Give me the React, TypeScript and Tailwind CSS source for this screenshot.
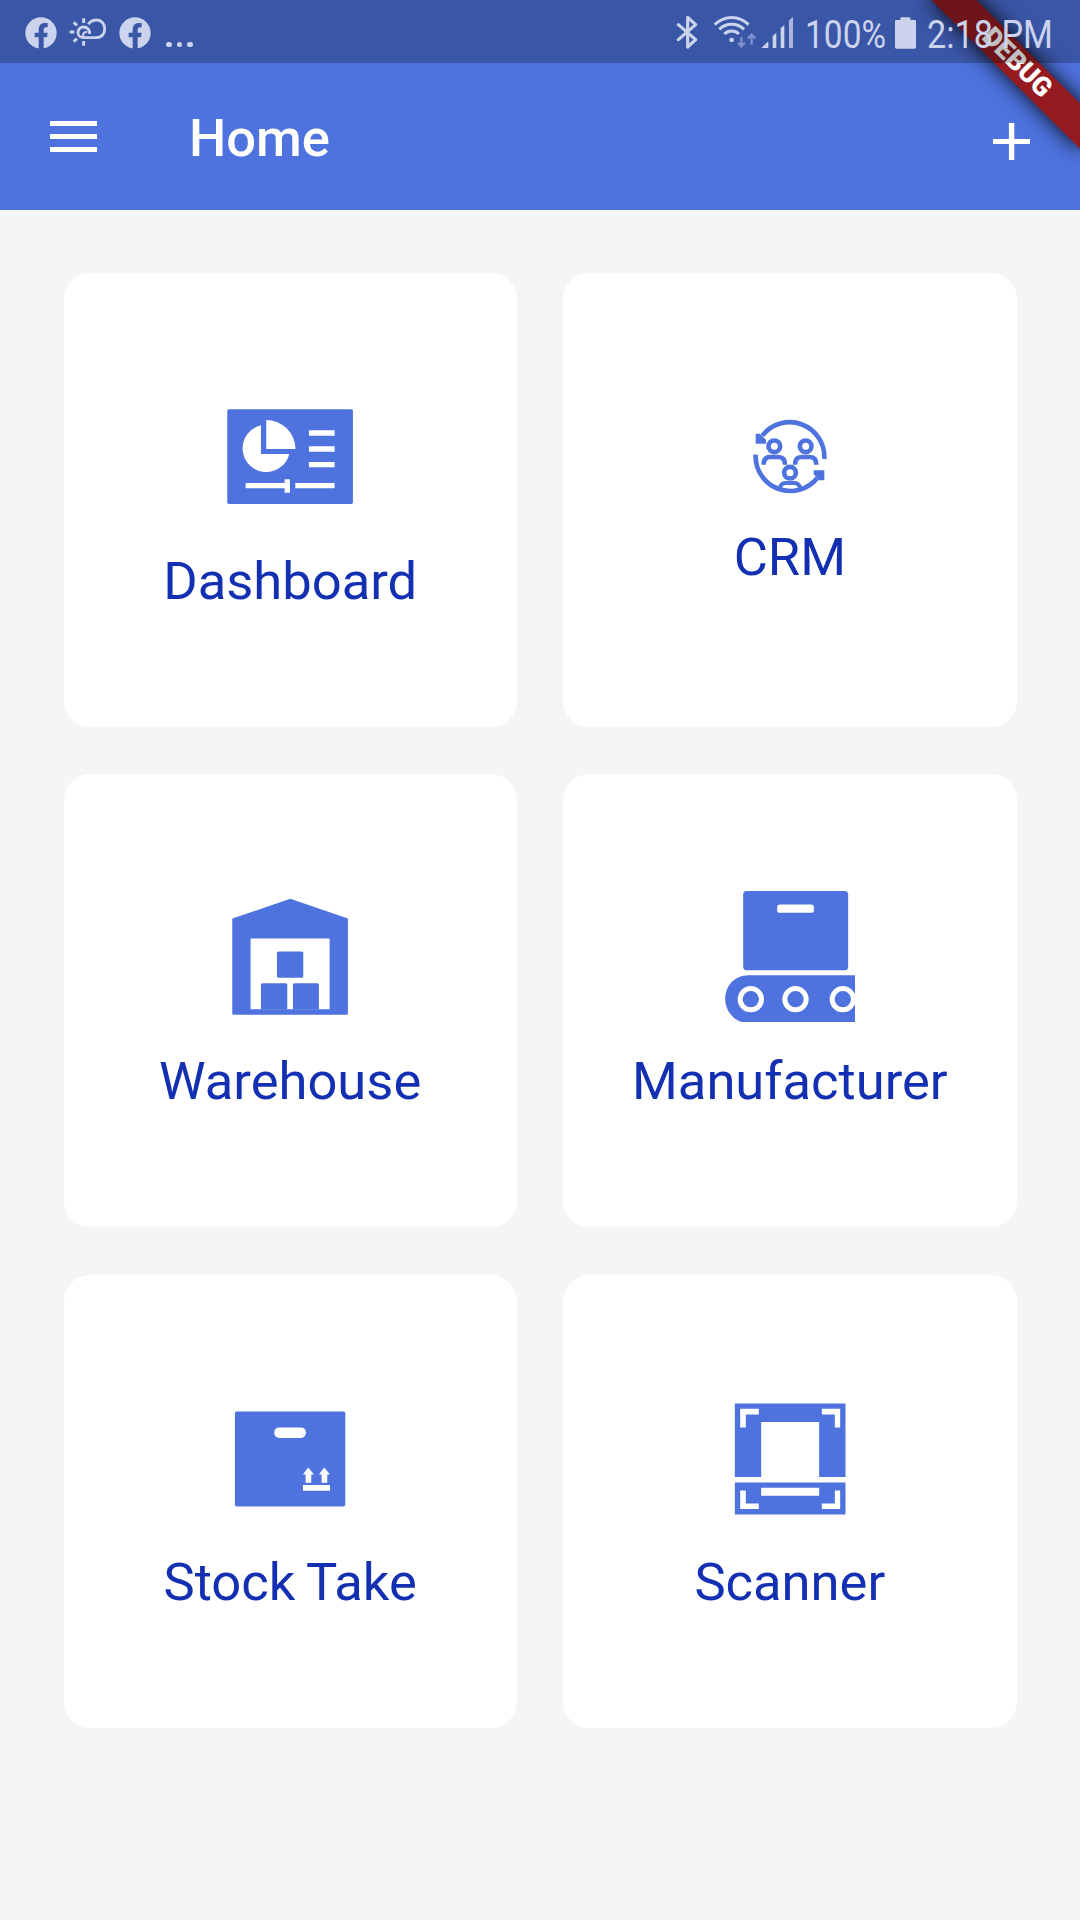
import type { ReactNode } from "react";

const BLUE = "#4e73df";
const STATUS = "#ccd3ec";
const STATUS_BG = "#3b57a7";

function FacebookBadge() {
  return (
    <svg className="h-[32px] w-[32px]" viewBox="73 50 96 96">
      <circle cx="121" cy="98" r="47" fill={STATUS} />
      <path
        d="M114 147V111H102V97H114V89C114 75 121 68 133 68H141V81H136C131 81 129 84 129 89V97H141L139 111H129V147Z"
        fill={STATUS_BG}
      />
    </svg>
  );
}

function WeatherIcon() {
  return (
    <svg className="h-[30px] w-[38px]" viewBox="205 53 114 90" fill="none" stroke={STATUS} strokeWidth="8.5">
      <path d="M267 104C268 92 260 83 249 83C239 83 232 90 232 100C232 109 239 115 249 115H285C303 115 312 104 312 89C312 73 302 62 288 62C277 62 268 67 263 75" />
      <path d="M250 115C243 105 250 96 260 99" strokeWidth="6" />
      <path d="M249 57V71M249 125V139M207 98H221M219 69L229 78M219 127L229 118" strokeWidth="9" />
    </svg>
  );
}

function BluetoothIcon() {
  return (
    <svg className="h-[34px] w-[22px]" viewBox="48 46 66 102" fill="none" stroke={STATUS} strokeWidth="9.5" strokeLinejoin="round" strokeLinecap="round">
      <path d="M55 75L107 120L83 142V53L107 75L55 120" />
    </svg>
  );
}

function WifiIcon() {
  return (
    <svg className="h-[34px] w-[43px]" viewBox="160 46 129 102" fill="none" stroke={STATUS} strokeWidth="9">
      <path d="M165 75C194 46 238 46 267 75M179 89C200 69 232 69 253 89M194 103C206 91 226 91 238 103" />
      <circle cx="216" cy="121" r="7" fill={STATUS} stroke="none" />
      <path d="M245 111V139M235 129L245 140L256 129M276 135V107M265 116L276 105L287 116" stroke="#7d90c9" strokeWidth="7" />
    </svg>
  );
}

function SignalIcon() {
  return (
    <svg className="h-[34px] w-[33px]" viewBox="303 46 99 102" fill={STATUS}>
      <path d="M304 145L325 125V145ZM338 109L349 99V145H338ZM362 86L373 76V145H362Z" />
      <path d="M387 62L399 51V145H387Z" fill="#aab6de" />
    </svg>
  );
}

function BatteryIcon() {
  return (
    <svg className="h-[32px] w-[21px]" viewBox="45 50 63 96" fill={STATUS}>
      <path d="M49 59H61V54Q61 51 64 51H88Q91 51 91 54V59H104Q108 59 108 63V141Q108 145 104 145H49Q45 145 45 141V63Q45 59 49 59Z" />
    </svg>
  );
}

function StatusBar() {
  return (
    <div className="relative flex h-[63px] items-start justify-between bg-black/25">
      <div className="flex items-start pt-[16.6px] pl-[24.5px]">
        <FacebookBadge />
        <div className="ml-[12px]">
          <WeatherIcon />
        </div>
        <div className="ml-[12px]">
          <FacebookBadge />
        </div>
        <div className="mt-[25px] ml-[15.5px] flex gap-[5px]">
          <span className="size-[5.5px] rounded-full bg-[#ccd3ec]" />
          <span className="size-[5.5px] rounded-full bg-[#ccd3ec]" />
          <span className="size-[5.5px] rounded-full bg-[#ccd3ec]" />
        </div>
      </div>
      <div className="flex w-[404px] items-start pt-[15.4px] text-[38.5px] leading-[38px] text-[#ccd3ec]">
        <BluetoothIcon />
        <div className="ml-[15.3px]">
          <WifiIcon />
        </div>
        <div className="ml-[4.7px]">
          <SignalIcon />
        </div>
        <div className="mt-[1px] ml-[11px] w-[83px]">
          <div className="origin-left scale-x-[0.87] whitespace-nowrap">100%</div>
        </div>
        <div className="mt-[1.3px] ml-[7px]">
          <BatteryIcon />
        </div>
        <div className="mt-[1px] ml-[11.3px]">
          <div className="origin-left scale-x-[0.888] whitespace-nowrap">2:18 PM</div>
        </div>
      </div>
    </div>
  );
}

function DebugBanner() {
  return (
    <div className="absolute top-[47.35px] left-[911.9px] flex h-[31.5px] w-[210px] rotate-45 items-center justify-center bg-[#951b21] text-[26.8px] leading-none font-black text-white shadow-[0_0_21px_rgba(0,0,0,0.95)]">
      DEBUG
    </div>
  );
}

function Header() {
  return (
    <header className="relative h-[210px] overflow-hidden bg-[#4e73df]">
      <DebugBanner />
      <StatusBar />
      <div className="flex h-[147px] items-center pr-[50px] pl-[49.7px]">
        <div className="flex flex-col gap-[7.9px]">
          <span className="h-[5.4px] w-[47.3px] bg-white" />
          <span className="h-[5.4px] w-[47.3px] bg-white" />
          <span className="h-[5.4px] w-[47.3px] bg-white" />
        </div>
        <h1 className="mt-[2px] ml-[92px] flex-1 text-[52.5px] leading-[62px] font-medium text-white">Home</h1>
        <svg className="mt-[10px] h-[37px] w-[37px]" viewBox="0 0 37 37" fill="#fff">
          <path d="M15.9 0H21.3V15.9H37V21.1H21.3V37H15.9V21.1H0V15.9H15.9Z" />
        </svg>
      </div>
    </header>
  );
}

function TileIcon({ viewBox, children }: { viewBox: string; children: ReactNode }) {
  return (
    <svg className="size-[131.25px]" viewBox={viewBox} fill={BLUE}>
      {children}
    </svg>
  );
}

function DashboardIcon() {
  return (
    <TileIcon viewBox="225.2 3 393.75 393.75">
      <rect x="232" y="58" width="377" height="284" rx="5" />
      <g fill="#fff">
        <path d="M349 90A88 88 0 0 1 437 177H349Z" />
        <path d="M333 106V192H418A71 71 0 1 1 333 106Z" />
        <path d="M477 121H554V137H477ZM477 169H554V185H477ZM477 216H554V232H477ZM287 279H404V268H420V308H404V295H287ZM436 279H554V295H436Z" />
      </g>
    </TileIcon>
  );
}

function CrmIcon() {
  return (
    <svg className="size-[84px]" viewBox="145 41 252 252" fill="none" stroke={BLUE} strokeWidth="14">
      <path d="M188 106A104 104 0 0 1 374 176" />
      <path d="M168 163A104 104 0 0 0 353 233" />
      <path d="M168 100H180L199 118V130H168ZM374 240H359L342 222V210H374Z" fill={BLUE} stroke="none" />
      <circle cx="224" cy="138" r="17.5" />
      <circle cx="318" cy="138" r="17.5" />
      <circle cx="271" cy="217" r="17.5" />
      <path d="M192 193C192 177 199 170 212 170H236C249 170 256 177 256 193M286 193C286 177 293 170 306 170H330C343 170 350 177 350 193" />
      <path d="M240 262C244 252 249 248 258 248H284C293 248 298 252 302 262" strokeWidth="12" />
    </svg>
  );
}

function WarehouseIcon() {
  return (
    <TileIcon viewBox="225.2 32.4 393.75 393.75">
      <path d="M421 56L594 115V399Q594 404 589 404H252Q247 404 247 399V115Z" />
      <path d="M302 175H539V387H302Z" fill="#fff" />
      <rect x="381" y="214" width="79" height="79" rx="5" />
      <path d="M333 388V314Q333 309 338 309H407Q412 309 412 314V388ZM429 388V314Q429 309 434 309H502Q507 309 507 314V388Z" />
    </TileIcon>
  );
}

function ManufacturerIcon() {
  return (
    <TileIcon viewBox="311.5 32.4 393.75 393.75">
      <path d="M377 32H676Q684 34 684 42V260Q684 270 674 270H379Q369 270 369 260V42Q369 34 377 32Z" />
      <rect x="471" y="73" width="110" height="25" rx="8" fill="#fff" />
      <path d="M710 285H386C342 285 315 318 315 356C315 390 337 419 370 427H710Z" />
      <g fill="none" stroke="#fff" strokeWidth="15">
        <circle cx="392" cy="357" r="32" />
        <circle cx="526" cy="357" r="32" />
        <circle cx="668" cy="357" r="32" />
      </g>
    </TileIcon>
  );
}

function StockIcon() {
  return (
    <TileIcon viewBox="225.2 2.8 393.75 393.75">
      <rect x="255" y="61" width="331" height="285" rx="5" />
      <g fill="#fff">
        <rect x="373" y="109" width="95" height="32" rx="15" />
        <path d="M475 229L492 250H484V275H467V250H459ZM523 229L540 250H532V275H515V250H507ZM459 282H540V299H459Z" />
      </g>
    </TileIcon>
  );
}

function ScannerIcon() {
  return (
    <TileIcon viewBox="131.5 2.8 393.75 393.75">
      <path d="M164 37H496V258H417V93H243V258H164ZM164 274H496V370H164Z" />
      <path
        d="M180 53H236V70H197V109H180ZM425 53H480V109H464V70H425ZM180 298H197V337H236V354H180ZM464 298H480V354H425V337H464ZM243 290H417V314H243Z"
        fill="#fff"
      />
    </TileIcon>
  );
}

const tiles = [
  { label: "Dashboard", icon: <DashboardIcon /> },
  { label: "CRM", icon: <CrmIcon /> },
  { label: "Warehouse", icon: <WarehouseIcon /> },
  { label: "Manufacturer", icon: <ManufacturerIcon /> },
  { label: "Stock Take", icon: <StockIcon /> },
  { label: "Scanner", icon: <ScannerIcon /> },
];

export default function App() {
  return (
    <div className="h-[1920px] w-[1080px] overflow-hidden bg-[#f5f5f5] font-['Roboto',sans-serif]">
      <Header />
      <main className="grid grid-cols-2 gap-x-[46.3px] gap-y-[47.2px] px-[63.5px] pt-[63.4px]">
        {tiles.map((tile) => (
          <div
            key={tile.label}
            className="flex h-[453.4px] flex-col items-center justify-center rounded-[26.25px] bg-white"
          >
            {tile.icon}
            <div className="mt-[29px] mb-[-2.75px] text-[52.5px] leading-[61.5px] text-[#1330b3] [word-spacing:-1.5px]">
              {tile.label}
            </div>
          </div>
        ))}
      </main>
    </div>
  );
}
